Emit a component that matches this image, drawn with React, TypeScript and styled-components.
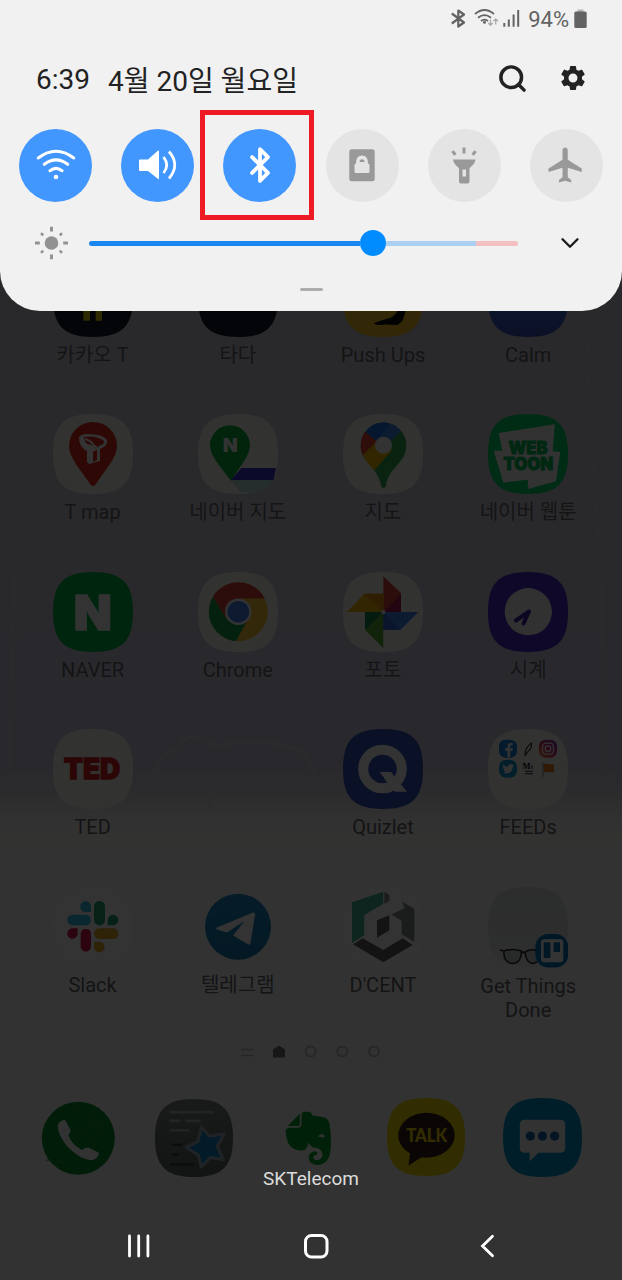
import React from "react";
import styled, { createGlobalStyle } from "styled-components";
import { Bluetooth, ChevronDown, Search } from "lucide-react";
import { MdFlight, MdSettings } from "react-icons/md";
import { FaFacebookF, FaTwitter } from "react-icons/fa";
import { SiEvernote } from "react-icons/si";

const GlobalStyle = createGlobalStyle`
  body { margin: 0; background: #323232; }
  * { box-sizing: border-box; }
  svg { display: block; flex: none; }
`;

const FONT = `Roboto, "Noto Sans CJK KR", sans-serif`;

const Phone = styled.main`
  position: relative;
  width: 622px;
  height: 1280px;
  overflow: hidden;
  font-family: ${FONT};
  background: linear-gradient(
    #c8c8d6 0,
    #cbcbdc 400px,
    #cdcddf 770px,
    #d9d9e0 795px,
    #f6f6f4 822px,
    #f9f9f9 870px,
    #f9f9f9 100%
  );
`;

const Wallpaper = styled.svg`
  position: absolute;
  inset: 0;
`;

const Home = styled.section`
  position: relative;
  display: flex;
  flex-direction: column;
  padding: 257px 20px 0;
`;

const AppGrid = styled.div`
  display: grid;
  grid-template-columns: repeat(4, 145.2px);
  grid-auto-rows: 157.4px;
`;

const AppCell = styled.div`
  display: flex;
  flex-direction: column;
  align-items: center;
  gap: 6px;
`;

const AppLabel = styled.span`
  width: 112px;
  font-size: 20px;
  line-height: 24px;
  text-align: center;
  color: #66666c;
`;

const PageDots = styled.div`
  display: flex;
  justify-content: center;
  height: 14px;
  margin-top: 1px;
`;

const Dock = styled.div`
  display: grid;
  grid-template-columns: repeat(5, 116px);
  justify-items: center;
  margin-top: 39px;
`;

const Scrim = styled.div`
  position: absolute;
  inset: 0;
  background: rgba(0, 0, 0, 0.8);
`;

const Panel = styled.section`
  position: absolute;
  top: 0;
  left: 0;
  right: 0;
  height: 311px;
  display: flex;
  flex-direction: column;
  background: #f1f1f1;
  border-radius: 0 0 40px 40px;
`;

const StatusBar = styled.div`
  display: flex;
  align-items: center;
  justify-content: flex-end;
  height: 38px;
  padding-right: 35px;
  color: #636363;
`;

const BatteryText = styled.span`
  margin: 1px 5px 0 8px;
  font-size: 22px;
  line-height: 26px;
`;

const DateRow = styled.div`
  display: flex;
  align-items: center;
  height: 82px;
  padding: 0 34px 0 36px;
  color: #222;
  font-size: 28px;
`;

const Clock = styled.span`
  width: 72px;
`;

const DateText = styled.span`
  flex: 1;
  white-space: nowrap;
`;

const HeaderIcons = styled.div`
  display: flex;
  align-items: center;
  gap: 30px;
  margin-top: -2px;
`;

const Toggles = styled.div`
  display: flex;
  justify-content: space-between;
  height: 90px;
  align-items: center;
  padding: 0 19px 0 19px;
`;

const Toggle = styled.div<{ $on?: boolean }>`
  position: relative;
  display: grid;
  place-items: center;
  width: 73px;
  height: 73px;
  border-radius: 50%;
  color: ${(p) => (p.$on ? "#fff" : "#999")};
  background: ${(p) => (p.$on ? "#4297ff" : "#e4e4e4")};
`;

const Highlight = styled.div`
  position: absolute;
  left: -23.5px;
  top: -18.5px;
  width: 114px;
  height: 110px;
  border: 5px solid #ee1b24;
`;

const BrightnessRow = styled.div`
  display: flex;
  align-items: center;
  height: 66px;
  padding-left: 34px;
`;

const Track = styled.div`
  display: flex;
  align-items: center;
  width: 429px;
  height: 5px;
  margin-left: 20px;
  margin-right: 37px;
`;

const Segment = styled.div<{ $w: number; $c: string }>`
  width: ${(p) => p.$w}px;
  height: 5px;
  background: ${(p) => p.$c};
  &:first-child { border-radius: 3px 0 0 3px; }
  &:last-child { border-radius: 0 3px 3px 0; }
`;

const Thumb = styled.div`
  flex: none;
  width: 26px;
  height: 26px;
  border-radius: 50%;
  background: #008cff;
`;

const Handle = styled.div`
  align-self: center;
  width: 23px;
  height: 3px;
  margin-top: 12px;
  border-radius: 2px;
  background: #adadad;
`;

const Footer = styled.footer`
  position: absolute;
  left: 0;
  right: 0;
  bottom: 0;
  display: flex;
  flex-direction: column;
  align-items: center;
`;

const Carrier = styled.span`
  font-size: 19px;
  line-height: 24px;
  color: #dcdcdc;
`;

const NavBar = styled.nav`
  display: flex;
  align-items: center;
  justify-content: space-between;
  width: 100%;
  height: 68px;
  margin-top: 21px;
  padding: 0 127px;
`;

const SQUIRCLE = "M40 0C69 0 80 11 80 40S69 80 40 80 0 69 0 40 11 0 40 0Z";
const HEAVY = {
  fontFamily: "Inter, Roboto, sans-serif",
  fontWeight: 900,
  textAnchor: "middle" as const,
  lengthAdjust: "spacingAndGlyphs" as const,
};

type IconProps = { bg?: string; size?: number; children?: React.ReactNode };

const AppIcon = ({ bg = "#f9f9f6", size = 80, children }: IconProps) => (
  <svg width={size} height={size} viewBox="0 0 80 80">
    <path d={SQUIRCLE} fill={bg} />
    {children}
  </svg>
);

const KakaoT = () => (
  <AppIcon bg="#141a28">
    <path d="M30.3 20H37V63.7H30.3zM42.7 20H49V63.7H42.7z" fill="#e8d800" />
  </AppIcon>
);

const PushUps = () => (
  <AppIcon bg="#f7c325">
    <path d="M55 40 54 55Q50 61 43 62L31 66Q33 69 42 67.5L54 68Q59 66 61 60L66 40Z" fill="#0a0a0a" />
  </AppIcon>
);

const Calm = () => (
  <AppIcon bg="url(#calm)">
    <defs>
      <linearGradient id="calm" x1="0" y1="0" x2="0" y2="1">
        <stop offset="0.5" stopColor="#3c74dc" />
        <stop offset="1" stopColor="#3c51c0" />
      </linearGradient>
    </defs>
  </AppIcon>
);

const TMap = () => (
  <AppIcon>
    <path d="M40 8A24 24 0 0 1 64 32C64 44 52 56 43 70Q40 74 37 70C28 56 16 44 16 32A24 24 0 0 1 40 8Z" fill="#e22a1c" />
    <path d="M26 24Q27 20 35 20Q50 20 54 26Q55 31 49 34L47 35V47L36 50L34 48V37Q26 33 26 24Z" fill="#fff" />
    <path d="M31 23Q44 21 51 27Q52 30 46 32L44 34V46L40 48V37Q45 34 38 31Q31 30 31 23Z" fill="#e22a1c" />
    <path d="M32 25Q39 27 41 32Q45 33 43 35L40 37" fill="none" stroke="#fff" strokeWidth="2" />
  </AppIcon>
);

const NaverMap = () => (
  <AppIcon>
    <path d="M43.5 54H78L75.5 66H32.5Z" fill="#3c32d8" />
    <path d="M32.5 66H75.5Q72 73 64 77Q52 80 42 78Z" fill="#bfe6e0" />
    <path d="M32 11.3A20 20 0 0 1 52 31.3C52 42 42 52 33 67C22 52 12 42 12 31.3A20 20 0 0 1 32 11.3Z" fill="#0bb53c" />
    <text {...HEAVY} x="32.3" y="38.3" fontSize="18.5" textLength="15" fill="#fff">N</text>
  </AppIcon>
);

const GoogleMaps = () => (
  <AppIcon>
    <defs>
      <clipPath id="gpin">
        <path d="M40.5 8.5A22.8 22.8 0 0 1 63.3 31.3C63.3 49 46 53 43 71Q42.500 74 40.500 74T38 71C35 53 17.700 49 17.700 31.300A22.800 22.800 0 0 1 40.500 8.500Z" />
      </clipPath>
    </defs>
    <g clipPath="url(#gpin)">
      <path d="M0 0H80V80H0z" fill="#34a853" />
      <path d="M8 52 40 20 49 36 30 58Z" fill="#fbbc04" />
      <path d="M0 0 23 18 34 27 20 41 0 60Z" fill="#ea4335" />
      <path d="M23 18 33 26.500 40 31 46 29 62 13 40 0Z" fill="#4285f4" />
      <path d="M23 18 33 26.500 47 11 35 0Z" fill="#1a73e8" />
    </g>
    <circle cx="40.500" cy="31.300" r="8.500" fill="#fff" />
  </AppIcon>
);

const Webtoon = () => (
  <AppIcon bg="#00d564">
    <path d="M10.700 19 66.700 10.300 64.700 37.300 72.300 38 68 67.300 40.300 75 39.700 65.700 15.300 68.700 5.700 36.700H14.300Z" fill="#f9f9f9" />
    <text {...HEAVY} x="40" y="40.300" fontSize="17" textLength="39" fill="#00c45a" stroke="#00c45a" strokeWidth="0.800">WEB</text>
    <text {...HEAVY} x="40.300" y="56" fontSize="17" textLength="50" fill="#00c45a" stroke="#00c45a" strokeWidth="0.800">TOON</text>
  </AppIcon>
);

const Naver = () => (
  <AppIcon bg="#02b845">
    <text {...HEAVY} x="39.700" y="57.500" fontSize="48" textLength="38" fill="#fff" stroke="#fff" strokeWidth="1.500">N</text>
  </AppIcon>
);

const Chrome = () => (
  <AppIcon>
    <defs>
      <clipPath id="chr"><circle cx="40.300" cy="39.700" r="29.500" /></clipPath>
    </defs>
    <g clipPath="url(#chr)">
      <path d="M0 0H80V80H0z" fill="#fdc830" />
      <path d="M5 8 28.500 47 40 53 50.500 46 36 73H0Z" fill="#17a34e" />
      <path d="M0 0H80V26.500H40L28.500 46.500 11 18Z" fill="#dc4437" />
    </g>
    <circle cx="40.300" cy="39.700" r="13.300" fill="#f9f9f9" />
    <circle cx="40.300" cy="39.700" r="10.800" fill="#4083f0" />
  </AppIcon>
);

const Photos = () => (
  <AppIcon>
    <path d="M40.300 4.300 58 21V40H40.300Z" fill="#db4437" />
    <path d="M58 22V40H40.300Z" fill="#a5205a" />
    <path d="M3.700 40 21.300 21.700H40.300V40Z" fill="#f9b908" />
    <path d="M21.300 21.700H40.300V40Z" fill="#e8940c" />
    <path d="M22 40H40.300V76L22 58Z" fill="#5cb13c" />
    <path d="M22 40H40.300L22 58Z" fill="#158c4b" />
    <path d="M40.300 40H75.300L57.300 58H40.300Z" fill="#4285f4" />
    <path d="M40.300 40 57.300 58H40.300Z" fill="#3367d6" />
    <circle cx="40.300" cy="40" r="2.200" fill="#e8eef4" />
  </AppIcon>
);

const ClockIcon = () => (
  <AppIcon bg="#4c28c8">
    <circle cx="40.300" cy="39.700" r="23.600" fill="#f6f6f6" />
    <path d="M28 48.500 41 39.500 35.500 51.500" fill="none" stroke="#3c1fa8" strokeWidth="4" strokeLinecap="round" strokeLinejoin="round" />
  </AppIcon>
);

const Ted = () => (
  <AppIcon>
    <text {...HEAVY} x="39" y="49.500" fontSize="28" textLength="56.500" fill="#dc1e1e" stroke="#dc1e1e" strokeWidth="1.300">TED</text>
  </AppIcon>
);

const Quizlet = () => (
  <AppIcon bg="#3350b8">
    <circle cx="39.500" cy="40" r="19.300" fill="none" stroke="#fff" strokeWidth="10" />
    <path d="M35.500 43H48L64 62.700H52Z" fill="#fff" />
    <path d="M35.500 43 41 50" stroke="#3350b8" strokeWidth="1.500" />
  </AppIcon>
);

const Feeds = () => (
  <AppIcon>
    <defs>
      <linearGradient id="insta" x1="0" y1="1" x2="1" y2="0">
        <stop offset="0" stopColor="#f58a30" />
        <stop offset="0.500" stopColor="#d62a70" />
        <stop offset="1" stopColor="#7a35c0" />
      </linearGradient>
    </defs>
    <rect x="11" y="10.700" width="18" height="18" rx="6.500" fill="#1388e0" />
    <FaFacebookF x="14" y="14" size={14} color="#fff" />
    <path d="M37 26.500Q36.500 19 43.500 14Q44 20 40 22.500L37 27" fill="none" stroke="#333" strokeWidth="1.200" />
    <rect x="51" y="10.700" width="18" height="18" rx="6.500" fill="url(#insta)" />
    <rect x="54.500" y="14.200" width="11" height="11" rx="3.500" fill="none" stroke="#fff" strokeWidth="1.300" />
    <circle cx="60" cy="19.700" r="2.800" fill="none" stroke="#fff" strokeWidth="1.300" />
    <rect x="11" y="30.700" width="18" height="18" rx="7" fill="#149bdc" />
    <FaTwitter x="14.500" y="34" size={11.500} color="#fff" />
    <text x="34.500" y="40" fontSize="8.500" fontFamily="Liberation Serif, serif" fontWeight="700" fill="#111">M</text>
    <path d="M44 36.500V40M37 42.300H45M37 44.800H45" stroke="#222" strokeWidth="1.100" />
    <path d="M55 34V48" stroke="#999" strokeWidth="1.200" />
    <path d="M55.500 34.500 66 35.500V43.500L55.500 43Z" fill="#ee8420" />
  </AppIcon>
);

const Slack = () => (
  <AppIcon bg="#fcfcfc">
    <path d="M19.600 27.700H32.700A5.300 5.300 0 0 1 32.700 38.300H19.600A5.300 5.300 0 0 1 19.600 27.700ZM38 25H33A5.400 5.400 0 1 1 38 19.500Z" fill="#36bce8" />
    <path d="M41 19.400A5.400 5.400 0 0 1 52 19.400V32.900A5.400 5.400 0 0 1 41 32.900ZM54.700 38.300V33A5.300 5.300 0 1 1 60 38.300Z" fill="#22a86e" />
    <path d="M46.400 41.300H60A5.300 5.300 0 0 1 60 52H46.400A5.300 5.300 0 0 1 46.400 41.300ZM41 54.700H46.500A5.300 5.300 0 1 1 41 60Z" fill="#e4a824" />
    <path d="M27.700 46.600A5.200 5.200 0 0 1 38 46.600V60A5.200 5.200 0 0 1 27.700 60ZM24.700 41.300V46.600A5.200 5.200 0 1 1 19.500 41.300Z" fill="#d41450" />
  </AppIcon>
);

const Telegram = () => (
  <AppIcon bg="#fafafa">
    <defs>
      <linearGradient id="tg" x1="0" y1="0" x2="0" y2="1">
        <stop offset="0" stopColor="#1b8cc6" />
        <stop offset="1" stopColor="#147bb4" />
      </linearGradient>
    </defs>
    <circle cx="40" cy="39.700" r="33" fill="url(#tg)" />
    <path d="M19 40.500 55 25.500Q57.500 25 57 28L52.500 56Q52 58.500 49.500 57L35 48.500 46.500 34 29 45.500 19 42.500Q17 41.500 19 40.500Z" fill="#fff" />
  </AppIcon>
);

const Dcent = () => (
  <AppIcon bg="#fff">
    <path d="M9 15.300 40.300 4.700V16.700L21.300 28.300V48.300L9 56Z" fill="#41b69c" />
    <path d="M41.300 4.700 46.300 7.700V14L41.300 16.700Z" fill="#868b8d" />
    <path d="M58.700 14.500 71.300 21.700V55L58.700 47.300V34L48.500 27.500 62 21Z" fill="#868b8d" />
    <path d="M10 57.300 19.700 51.300 40.300 63 59.700 51.300 69.700 58 40.300 75.300Z" fill="#5f6062" />
    <path d="M34 33.300 46.300 28.300V43.300L34 50.700Z" fill="#5f6062" />
  </AppIcon>
);

const GetThings = () => (
  <svg width="80" height="81" viewBox="0 0 80 81">
    <defs>
      <linearGradient id="desk" x1="0" y1="0" x2="0" y2="1">
        <stop offset="0" stopColor="#dadde0" />
        <stop offset="0.750" stopColor="#e2e4e6" />
        <stop offset="1" stopColor="#f2f2f2" />
      </linearGradient>
    </defs>
    <path d={SQUIRCLE} fill="url(#desk)" />
    <path d="M12 63 16 64Q15 75 24 76.500Q33 77 33.500 64Q24 61 16 64M33.500 66Q35.500 64.500 37 66M50 64Q44 61 37 65Q38 76 45 76.500L49 75" fill="#c8cbce" stroke="#26262a" strokeWidth="1.500" />
    <rect x="47.300" y="47" width="33" height="33.500" rx="13" fill="#0079bf" />
    <rect x="53" y="52.300" width="22.300" height="23" rx="3" fill="#fff" />
    <path d="M55.700 55.300H62.300V71H55.700zM65.700 55.300H72V65H65.700z" fill="#0079bf" />
  </svg>
);

const DialIcon = () => (
  <svg width="80" height="80" viewBox="0 0 80 80">
    <circle cx="40.300" cy="40.300" r="36.500" fill="#058a28" />
    <path d="M34 5 62 27 24 36M62 27 54 50M8 62 26 64" fill="none" stroke="#2a9a45" strokeWidth="0.800" />
    <path d="M19.700 28Q20 24 25 22Q27 21 28 23.500L32.500 32Q33 34 30.500 37Q33 46 43.700 52Q47 49 50 49.500L59.500 54Q62 55.500 60 58Q57 63 51 62Q40 60 29 48Q20 37 19.700 28Z" fill="#f9f9f9" />
  </svg>
);

const Notes = () => (
  <svg width="80" height="80" viewBox="-1 -1 82 82">
    <defs>
      <linearGradient id="memo" x1="0" y1="0" x2="0" y2="1">
        <stop offset="0" stopColor="#7c8585" />
        <stop offset="1" stopColor="#5e6667" />
      </linearGradient>
    </defs>
    <path d={SQUIRCLE} fill="url(#memo)" />
    <path d="M15 13.500H60.500M15 22.500H26M31 22.500H46.500M15 32H35" stroke="#a9afaf" strokeWidth="2.700" />
    <path d="M17 47H28M17 57H24M16 67H40" stroke="#3a4042" strokeWidth="2.500" />
    <path d="M47.500 29 56 38 71 36 63.800 48.500 70 62 57 60 47.500 69.500 44.500 57.500 32 49.500 44 43.500Z" fill="#0f86c8" stroke="#9fb1bc" strokeWidth="3.200" strokeLinejoin="round" />
  </svg>
);

const Evernote = () => (
  <AppIcon bg="#fafafa">
    <SiEvernote x="11.500" y="13.500" size={53.500} color="#04a12e" />
  </AppIcon>
);

const KakaoTalk = () => (
  <AppIcon bg="#fae100" size={78}>
    <ellipse cx="40.500" cy="38.200" rx="29" ry="23" fill="#3b1e1e" />
    <path d="M24 54 22 69.500 38 59Z" fill="#3b1e1e" />
    <text x="40.700" y="45.500" fontFamily="Lato, sans-serif" fontWeight="900" fontSize="19" textAnchor="middle" textLength="42" lengthAdjust="spacingAndGlyphs" fill="#fae100">TALK</text>
  </AppIcon>
);

const Messages = () => (
  <AppIcon bg="#0096cc" size={79}>
    <path d="M22 22H58Q63 22 63 27V50Q63 55.500 58 55.500H36L27 64V55.500H22Q17 55.500 17 50V27Q17 22 22 22Z" fill="#f9f9f9" />
    <g fill="#1565a8">
      <circle cx="27.700" cy="38.500" r="4.700" />
      <circle cx="40" cy="38.500" r="4.700" />
      <circle cx="52.300" cy="38.500" r="4.700" />
    </g>
  </AppIcon>
);

const apps: ([string, React.ReactNode] | null)[] = [
  ["카카오 T", <KakaoT />],
  ["타다", <AppIcon bg="#141a28" />],
  ["Push Ups", <PushUps />],
  ["Calm", <Calm />],
  ["T map", <TMap />],
  ["네이버 지도", <NaverMap />],
  ["지도", <GoogleMaps />],
  ["네이버 웹툰", <Webtoon />],
  ["NAVER", <Naver />],
  ["Chrome", <Chrome />],
  ["포토", <Photos />],
  ["시계", <ClockIcon />],
  ["TED", <Ted />],
  null,
  ["Quizlet", <Quizlet />],
  ["FEEDs", <Feeds />],
  ["Slack", <Slack />],
  ["텔레그램", <Telegram />],
  ["D'CENT", <Dcent />],
  ["Get Things Done", <GetThings />],
];

const StatusIcons = () => (
  <svg width="70" height="22" viewBox="450 8 70 22" fill="none" stroke="#636363">
    <path d="M451.800 13.500 464 22.500 458.300 26.500V10.500L464 14.500 451.800 23.500" strokeWidth="2.200" strokeLinejoin="round" />
    <path d="M475 14Q484.500 6 494 14M478 17.800Q484.500 12.500 491 17.800M481 21Q484.500 18.300 488 21" strokeWidth="1.800" />
    <circle cx="484.500" cy="22.300" r="1.500" fill="#636363" stroke="none" />
    <path d="M490.500 19.500V25M488.300 23 490.500 25.300 492.700 23M495.700 24.500V19.500M493.500 21.300 495.700 19 497.900 21.300" stroke="#aaa" strokeWidth="1.300" />
    <path d="M504.300 23V26.800M508.800 19.500V26.800M513.600 14.500V26.800M518.200 10V26.800" strokeWidth="2" />
  </svg>
);

const Battery = () => (
  <svg width="13" height="20" viewBox="0 0 13 20">
    <path d="M3.500 0.500H9.500V3H3.500z" fill="#b5b5b5" />
    <rect x="0.300" y="2.500" width="12.400" height="16.500" rx="1.500" fill="#636363" />
  </svg>
);

const WifiIcon = () => (
  <svg width="40" height="34" viewBox="0 0 40 34" fill="none" stroke="#fff" strokeWidth="3" strokeLinecap="round">
    <path d="M2.300 10Q20 -3.500 37.700 10M8.300 16.300Q20 7.500 31.700 16.300M14 22.700Q20 18 26 22.700" />
    <circle cx="20" cy="29" r="2.300" fill="#fff" stroke="none" />
  </svg>
);

const SoundIcon = () => (
  <svg width="38" height="30" viewBox="0 0 38 30" fill="none" stroke="#fff" strokeWidth="2.700">
    <path d="M1 9.500H9L18.500 1Q20 0 20 1.500V28.500Q20 30 18.500 28.500L9 21H1Q0 21 0 20V10.500Q0 9.500 1 9.500Z" fill="#fff" stroke="none" />
    <path d="M24.500 7Q31 15 24.500 23M30 1.500Q41.500 15 30 28.500" />
  </svg>
);

const RotationLock = () => (
  <svg width="26" height="33" viewBox="0 0 26 33">
    <rect x="0.300" y="0.300" width="25.400" height="32" rx="2.500" fill="#999" />
    <path d="M7 14.500Q7 6.500 13 6.500T19 14.500Q20.500 14.500 20.500 16V22.500Q20.500 24 19 24H7Q5.500 24 5.500 22.500V16Q5.500 14.500 7 14.500Z" fill="#e4e4e4" />
    <path d="M10.500 13Q10.500 10.300 13 10.300T15.500 13Z" fill="#999" />
  </svg>
);

const Torch = () => (
  <svg width="26" height="37" viewBox="0 0 26 37">
    <path d="M11.500 0.500H14.500V6.500H11.500zM0.300 5 2.700 3.200 5.500 7 3 8.800ZM25.700 5 23.300 3.200 20.500 7 23 8.800Z" fill="#999" />
    <path d="M2 12.500H24.500Q24 17 18.500 21V34.500Q18.500 36.500 16.500 36.500H10Q8 36.500 8 34.500V21Q2.500 17 2 12.500ZM11.500 22.500V29.500H15V22.500Z" fill="#999" fillRule="evenodd" />
  </svg>
);

const Sun = () => (
  <svg width="35" height="34" viewBox="-17.500 -17 35 34">
    <circle r="6.800" fill="#929292" />
    <path d="M0 -16.300V-11.500M0 11.500V16.300M-16.500 0H-11.700M11.700 0H16.500" stroke="#929292" strokeWidth="3" />
    <path d="M-10.500 -9.800 -8.300 -7.600M10.500 -9.800 8.300 -7.600M-10.500 9.800 -8.300 7.600M10.500 9.800 8.300 7.600" stroke="#929292" strokeWidth="2.600" />
  </svg>
);

export default function App() {
  return (
    <>
      <GlobalStyle />
      <Phone>
        <Wallpaper width="622" height="1280" viewBox="0 0 622 1280" fill="none" stroke="#d6d6e4" strokeWidth="3">
          <path d="M8 800 11 690Q12 640 16 560M12 650Q26 620 34 580" opacity="0.700" />
          <path d="M586 300 590 430 601 560 603 790M560 340Q578 370 588 400M440 580Q480 550 520 542L600 600M470 470 540 560" opacity="0.500" />
          <path d="M210 810Q212 790 200 780Q180 774 164 778Q150 772 162 758Q174 750 182 742Q190 732 206 740L215 746Q260 738 296 748Q312 756 314 778" opacity="0.800" />
        </Wallpaper>
        <Home>
          <AppGrid>
            {apps.map((app, i) =>
              app ? (
                <AppCell key={i}>
                  {app[1]}
                  <AppLabel>{app[0]}</AppLabel>
                </AppCell>
              ) : (
                <AppCell key={i} />
              ),
            )}
          </AppGrid>
          <PageDots>
            <svg width="142" height="14" viewBox="240 1045 142 14" fill="none" stroke="#bdbdbd" strokeWidth="2">
              <path d="M241 1049.500H254M241 1055.500H254" strokeWidth="1.500" />
              <path d="M273 1049.500 279 1045.500 285 1049.500V1057.500H273Z" fill="#707070" stroke="none" />
              <circle cx="310.700" cy="1051.500" r="5" />
              <circle cx="342.300" cy="1051.500" r="5" />
              <circle cx="374" cy="1051.500" r="5" />
            </svg>
          </PageDots>
          <Dock>
            <DialIcon />
            <Notes />
            <Evernote />
            <KakaoTalk />
            <Messages />
          </Dock>
        </Home>
        <Scrim />
        <Panel>
          <StatusBar>
            <StatusIcons />
            <BatteryText>94%</BatteryText>
            <Battery />
          </StatusBar>
          <DateRow>
            <Clock>6:39</Clock>
            <DateText>4월 20일 월요일</DateText>
            <HeaderIcons>
              <Search size={31} strokeWidth={2.700} />
              <MdSettings size={30} />
            </HeaderIcons>
          </DateRow>
          <Toggles>
            <Toggle $on><WifiIcon /></Toggle>
            <Toggle $on><SoundIcon /></Toggle>
            <Toggle $on>
              <Bluetooth size={38} strokeWidth={2.400} />
              <Highlight />
            </Toggle>
            <Toggle><RotationLock /></Toggle>
            <Toggle><Torch /></Toggle>
            <Toggle><MdFlight size={42} /></Toggle>
          </Toggles>
          <BrightnessRow>
            <Sun />
            <Track>
              <Segment $w={271} $c="#1a87f0" />
              <Thumb />
              <Segment $w={90} $c="#abcff0" />
              <Segment $w={42} $c="#f4bfc0" />
            </Track>
            <ChevronDown size={30} strokeWidth={1.900} color="#1c1c1c" />
          </BrightnessRow>
          <Handle />
        </Panel>
        <Footer>
          <Carrier>SKTelecom</Carrier>
          <NavBar>
            <svg width="24" height="24" viewBox="0 0 24 24" stroke="#fff" strokeWidth="2.800" strokeLinecap="round">
              <path d="M2.500 2V22M11.700 2V22M20.900 2V22" />
            </svg>
            <svg width="26" height="26" viewBox="0 0 26 26" fill="none" stroke="#fff" strokeWidth="3">
              <rect x="2.500" y="2.500" width="21.500" height="21.500" rx="6" />
            </svg>
            <svg width="15" height="24" viewBox="0 0 15 24" fill="none" stroke="#fff" strokeWidth="2.800" strokeLinecap="round">
              <path d="M12.500 2.200 2.500 12 12.500 21.800" />
            </svg>
          </NavBar>
        </Footer>
      </Phone>
    </>
  );
}
